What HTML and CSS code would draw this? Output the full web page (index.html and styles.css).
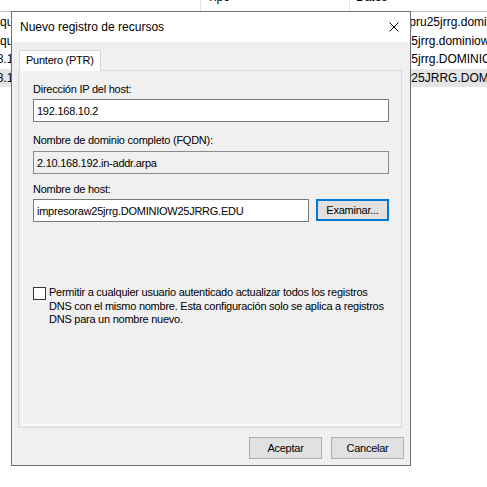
FILE: index.html
```html
<!DOCTYPE html>
<html lang="es">
<head>
<meta charset="utf-8">
<title>Nuevo registro de recursos</title>
<link rel="stylesheet" href="styles.css">
</head>
<body>
<div class="screen">
  <div class="list">
    <div class="list-head">
      <div class="col-name"></div>
      <div class="col-type">Tipo</div>
      <div class="col-data">Datos</div>
    </div>
    <div class="list-body">
      <div class="row"><div class="col-name">que la carpeta principal)</div><div class="col-type">Inicio de autoridad (SOA)</div><div class="col-data">impresorapru25jrrg.dominiow25jrrg.edu.</div></div>
      <div class="row"><div class="col-name">que la carpeta principal)</div><div class="col-type">Servidor de nombres (NS)</div><div class="col-data">equipo-w25jrrg.dominiow25jrrg.edu.</div></div>
      <div class="row"><div class="col-name ip">68.10.1</div><div class="col-type">Puntero (PTR)</div><div class="col-data">equipo-w25jrrg.DOMINIOW25JRRG.EDU</div></div>
      <div class="row selected"><div class="col-name ip">68.10.2</div><div class="col-type">Puntero (PTR)</div><div class="col-data">equipo1-w25JRRG.DOMINIOW25JRRG.EDU</div></div>
    </div>
  </div>

  <div class="dialog">
    <div class="titlebar">
      <span class="title">Nuevo registro de recursos</span>
      <svg class="close" width="10" height="10" viewBox="0 0 10 10"><path d="M0.5 0.5 L9.5 9.5 M9.5 0.5 L0.5 9.5" stroke="#000" stroke-width="1" fill="none"/></svg>
    </div>
    <div class="dlg-body">
      <div class="tabs">
        <div class="tab">Puntero (PTR)</div>
      </div>
      <div class="panel">
        <div class="page">
          <div class="field f1">
            <div class="label">Dirección IP del host:</div>
            <input class="text" type="text" value="192.168.10.2">
          </div>
          <div class="field f2">
            <div class="label l2">Nombre de dominio completo (FQDN):</div>
            <input class="text readonly" type="text" value="2.10.168.192.in-addr.arpa" readonly>
          </div>
          <div class="field f3">
            <div class="label">Nombre de host:</div>
            <div class="host-row">
              <input class="text host" type="text" value="impresoraw25jrrg.DOMINIOW25JRRG.EDU">
              <button class="btn focus" type="button">Examinar...</button>
            </div>
          </div>
          <div class="check-row">
            <span class="checkbox"></span>
            <span class="check-text">Permitir a cualquier usuario autenticado actualizar todos los registros<br>DNS con el mismo nombre. Esta configuración solo se aplica a registros<br>DNS para un nombre nuevo.</span>
          </div>
        </div>
      </div>
      <div class="buttons">
        <button class="btn" type="button">Aceptar</button>
        <button class="btn" type="button">Cancelar</button>
      </div>
    </div>
  </div>
</div>
</body>
</html>
```

FILE: styles.css
```css
html, body {
  margin: 0;
  padding: 0;
  background: #fff;
}

.screen {
  position: relative;
  width: 487px;
  height: 487px;
  overflow: hidden;
  font-family: "Liberation Sans", Arial, sans-serif;
  font-size: 12px;
  color: #000;
  background: #fff;
}

/* Background list view */
.list {
  width: 487px;
}

.list-head {
  display: grid;
  grid-template-columns: 200px 149px 1fr;
  height: 11px;
  border-bottom: 1px solid #c4c4c4;
  overflow: hidden;
}

.list-head > div {
  line-height: 12px;
  margin-top: -9px;
  white-space: nowrap;
}

.list-head .col-type,
.list-head .col-data {
  border-left: 1px solid #e5e5e5;
  padding-left: 6px;
  height: 30px;
}

.list-body {
  padding-top: 1px;
}

.row {
  display: grid;
  grid-template-columns: 200px 149px 1fr;
  height: 18.5px;
  line-height: 18.5px;
  white-space: nowrap;
  overflow: hidden;
}

.row.selected {
  background: #e5e5e5;
}

.row .col-name {
  overflow: hidden;
}

.row .col-name.ip {
  text-indent: -10px;
}

.row .col-type,
.row .col-data {
  padding-left: 7px;
  overflow: hidden;
}

/* Dialog */
.dialog {
  position: absolute;
  left: 11px;
  top: 11px;
  width: 400px;
  height: 455px;
  box-sizing: border-box;
  border: 1px solid #6f6f6f;
  background: #f0f0f0;
  display: flex;
  flex-direction: column;
}

.titlebar {
  height: 30px;
  flex: none;
  background: #fff;
  display: flex;
  align-items: center;
  padding-left: 8px;
  padding-right: 11px;
  font-size: 12px;
}

.title {
  flex: 1;
}

.close {
  display: block;
}

.dlg-body {
  flex: 1;
  min-width: 0;
  display: flex;
  flex-direction: column;
  padding: 8px 8px 6px 6px;
  font-size: 11px;
  letter-spacing: -0.25px;
}

.tabs {
  height: 20px;
  flex: none;
  display: flex;
  align-items: flex-start;
}

.tab {
  position: relative;
  z-index: 1;
  margin-left: 1px;
  height: 21px;
  box-sizing: border-box;
  padding: 0 6px;
  line-height: 19px;
  background: #fff;
  border: 1px solid #d9d9d9;
  border-bottom: none;
}

.panel {
  flex: 1;
  min-width: 0;
  display: flex;
  border: 1px solid #d9d9d9;
  padding: 0 0 2px 3px;
}

.page {
  flex: 1;
  min-width: 0;
  border-left: 1px solid #fff;
  border-bottom: 1px solid #fff;
  padding: 12px 12px 0 10px;
}

.label {
  line-height: 13px;
  margin-bottom: 3px;
}

.label.l2 {
  margin-bottom: 4px;
}

.f1 { margin-bottom: 12px; }
.f2 { margin-bottom: 9px; }

.text {
  display: block;
  width: 100%;
  height: 23px;
  box-sizing: border-box;
  margin: 0;
  border: 1px solid #7a7a7a;
  border-radius: 0;
  padding: 0 3px;
  font: inherit;
  font-size: 11px;
  letter-spacing: -0.25px;
  color: #000;
  background: #fff;
  outline: none;
}

.text.readonly {
  background: #f0f0f0;
  border-color: #8c8c8c;
}

.host-row {
  display: flex;
  gap: 7px;
}

.text.host {
  flex: 1;
  width: auto;
  min-width: 0;
}

.btn {
  width: 73px;
  height: 22px;
  box-sizing: border-box;
  margin: 0;
  padding: 0;
  border: 1px solid #adadad;
  border-radius: 0;
  background: #e1e1e1;
  font: inherit;
  font-size: 11px;
  letter-spacing: -0.25px;
  color: #000;
}

.btn.focus {
  border: 2px solid #0078d7;
}

.check-row {
  display: flex;
  align-items: flex-start;
  margin-top: 64px;
}

.checkbox {
  flex: none;
  width: 13px;
  height: 13px;
  box-sizing: border-box;
  border: 1px solid #333;
  background: #fff;
  margin-top: 1px;
  margin-right: 3px;
}

.check-text {
  line-height: 13.5px;
  white-space: nowrap;
}

.buttons {
  flex: none;
  display: flex;
  justify-content: flex-end;
  gap: 9px;
  margin-top: 9px;
  margin-right: -2px;
}
```
